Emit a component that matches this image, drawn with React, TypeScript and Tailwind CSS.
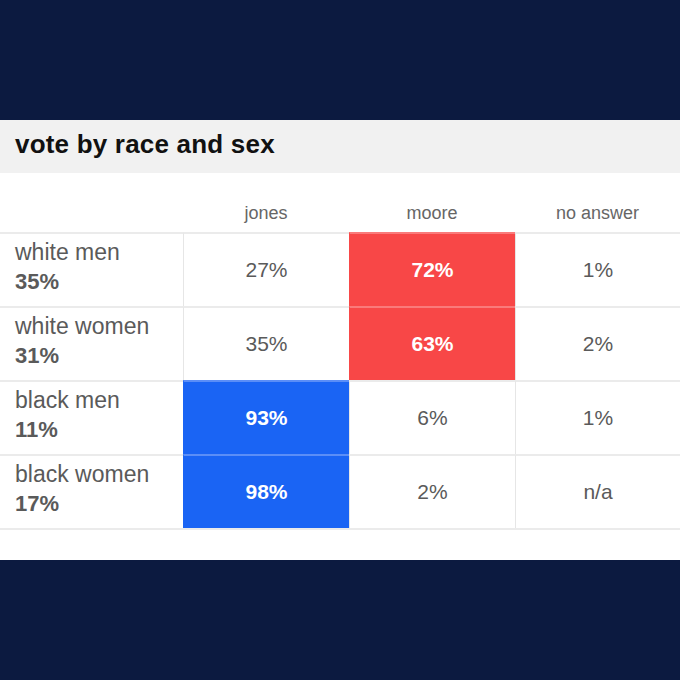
import React from 'react';

type Cell = { value: string; tone?: 'red' | 'blue' };

interface Row {
  label: string;
  share: string;
  cells: Cell[];
}

const rows: Row[] = [
  { label: 'white men', share: '35%', cells: [{ value: '27%' }, { value: '72%', tone: 'red' }, { value: '1%' }] },
  { label: 'white women', share: '31%', cells: [{ value: '35%' }, { value: '63%', tone: 'red' }, { value: '2%' }] },
  { label: 'black men', share: '11%', cells: [{ value: '93%', tone: 'blue' }, { value: '6%' }, { value: '1%' }] },
  { label: 'black women', share: '17%', cells: [{ value: '98%', tone: 'blue' }, { value: '2%' }, { value: 'n/a' }] },
];

const columns = ['jones', 'moore', 'no answer'];

const cellClass = (tone?: 'red' | 'blue') => {
  if (tone === 'red') return 'bg-[#f84747] border-t-[#fa7a7a] border-l-[#f84747] text-white font-bold';
  if (tone === 'blue') return 'bg-[#1a64f4] border-t-[#5b8ef7] border-l-[#1a64f4] text-white font-bold';
  return 'bg-white border-t-[#ebebeb] border-l-[#e6e6e6] text-[#5a5a5a]';
};

export default function App() {
  return (
    <div
      className="w-[680px] h-[680px] bg-[#0c1a40] pt-[120px]"
      style={{ fontFamily: '"Liberation Sans", Arial, sans-serif' }}
    >
      <div className="bg-white h-[440px] flex flex-col">
        <div className="h-[53px] bg-[#f1f1f1] flex items-center px-[15px] pb-[6px]">
          <h1 className="text-[26px] font-bold tracking-[0.2px] text-[#111111] leading-none">
            vote by race and sex
          </h1>
        </div>

        <div className="grid grid-cols-[183px_166px_166px_1fr] h-[59px] items-end pb-[9px]">
          <div />
          {columns.map((c) => (
            <div key={c} className="text-center text-[18px] leading-[20px] text-[#666666]">
              {c}
            </div>
          ))}
        </div>

        <div className="border-b-2 border-[#ebebeb]">
          {rows.map((row) => (
            <div key={row.label} className="grid grid-cols-[183px_166px_166px_1fr] h-[74px]">
              <div className="border-t-2 border-[#ebebeb] pl-[15px] pt-[4px] text-[#5a5a5a]">
                <div className="text-[23px] leading-[29px]">{row.label}</div>
                <div className="text-[22px] leading-[29px] font-bold">{row.share}</div>
              </div>
              {row.cells.map((cell, i) => (
                <div
                  key={i}
                  className={`border-t-2 border-l flex items-center justify-center text-[21px] ${cellClass(cell.tone)}`}
                >
                  {cell.value}
                </div>
              ))}
            </div>
          ))}
        </div>
      </div>
    </div>
  );
}
